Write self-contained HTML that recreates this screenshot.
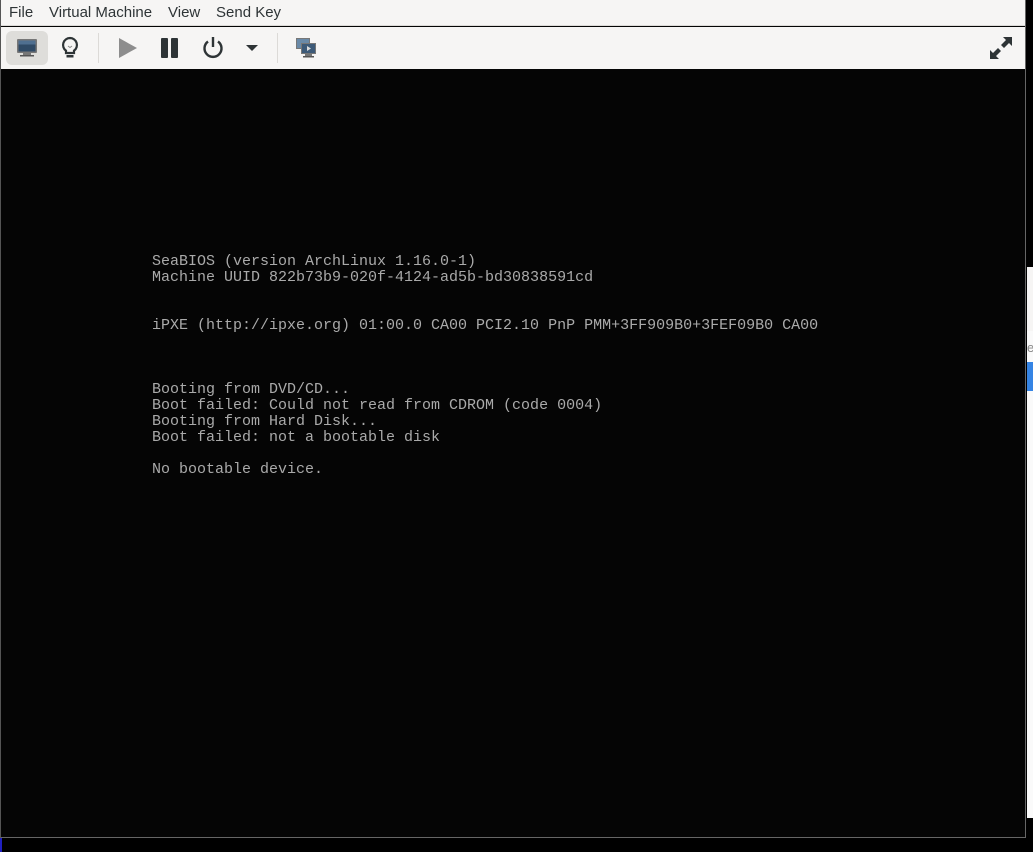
<!DOCTYPE html>
<html><head><meta charset="utf-8"><style>
*{margin:0;padding:0;box-sizing:border-box}
html,body{width:1033px;height:852px;overflow:hidden;background:#000;font-family:"Liberation Sans","DejaVu Sans",sans-serif}
.win{position:absolute;left:0;top:0;width:1026px;height:838px;background:#050505;border-left:1px solid #555;border-right:1px solid #666;border-bottom:1px solid #666}
.menu{position:absolute;left:0;top:0;width:100%;height:26px;background:#f6f5f4;border-bottom:1px solid #dcdad7;font-size:15px;color:#2e3436}
.menu span{position:absolute;top:4px}
.tb{position:absolute;left:0;top:27px;width:100%;height:42px;background:#f6f5f4}
.sel{position:absolute;left:5px;top:4px;width:42px;height:34px;background:#deddda;border-radius:6px}
.sep{position:absolute;top:6px;width:1px;height:30px;background:#dcdad7}
svg{position:absolute}
pre{position:absolute;left:151px;top:254px;font-family:"Liberation Mono","DejaVu Sans Mono",monospace;font-size:15px;line-height:16px;color:#aaa;letter-spacing:0}
.r{position:absolute;left:1027px;width:6px}
</style></head><body>
<div class="r" style="top:267px;height:64px;background:#f6f5f4"></div>
<div class="r" style="top:331px;height:31px;background:#fafafa"></div>
<div class="r" style="top:362px;height:29px;background:#3584e4"></div>
<div class="r" style="top:391px;height:427px;background:#fafafa"></div>
<div style="position:absolute;left:1027px;top:340px;font-size:13px;color:#888">e</div>
<div class="win">
<div class="menu"><span style="left:8px">File</span><span style="left:48px">Virtual Machine</span><span style="left:167px">View</span><span style="left:215px">Send Key</span></div>
<div class="tb">
<div class="sel"></div>
<svg style="left:14px;top:8px" width="24" height="24" viewBox="0 0 24 24"><rect x="2" y="4" width="20" height="14" rx="1" fill="#777"/><rect x="3.5" y="5.5" width="17" height="11" fill="#2f4a66"/><rect x="3.5" y="5.5" width="17" height="4" fill="#4f6f90"/><rect x="8" y="18" width="8" height="2" fill="#777"/><rect x="5" y="20" width="14" height="1.5" fill="#555"/></svg>
<svg style="left:57px;top:8px" width="24" height="26" viewBox="0 0 24 26"><path d="M12 3a7 7 0 0 0-4 12.7V18h8v-2.3A7 7 0 0 0 12 3z" fill="none" stroke="#2e3436" stroke-width="2.2"/><rect x="8.5" y="20" width="7" height="2.5" fill="#2e3436"/><path d="M10 11l2 1.5 2-1.5" fill="none" stroke="#888" stroke-width="1"/></svg>
<div class="sep" style="left:97px"></div>
<svg style="left:116px;top:10px" width="22" height="22" viewBox="0 0 22 22"><path d="M2 1L20 11 2 21z" fill="#8d8d8d"/></svg>
<svg style="left:159px;top:10px" width="20" height="22" viewBox="0 0 20 22"><rect x="1" y="1" width="7" height="20" rx="1" fill="#2e3436"/><rect x="11" y="1" width="7" height="20" rx="1" fill="#2e3436"/></svg>
<svg style="left:200px;top:9px" width="24" height="24" viewBox="0 0 24 24"><path d="M7 5.5A8.5 8.5 0 1 0 17 5.5" fill="none" stroke="#2e3436" stroke-width="2.4"/><rect x="10.8" y="1" width="2.4" height="10" fill="#2e3436"/></svg>
<svg style="left:244px;top:17px" width="14" height="8" viewBox="0 0 14 8"><path d="M1 1h12L7 7z" fill="#2e3436"/></svg>
<div class="sep" style="left:276px"></div>
<svg style="left:294px;top:10px" width="22" height="22" viewBox="0 0 22 22"><rect x="1" y="1" width="14" height="11" fill="#777"/><rect x="2" y="2" width="12" height="9" fill="#6a8aa8"/><rect x="6" y="6" width="15" height="11" fill="#777"/><rect x="7" y="7" width="13" height="9" fill="#3d5a78"/><path d="M12 9l4 2.5-4 2.5z" fill="#ddd"/><rect x="10" y="17" width="7" height="2" fill="#777"/><rect x="8" y="19" width="11" height="1.5" fill="#555"/></svg>
<svg style="left:987px;top:8px" width="26" height="26" viewBox="0 0 26 26"><path d="M15 2h9v9l-3-3-5 5-3-3 5-5z" fill="#2e3436"/><path d="M11 24H2v-9l3 3 5-5 3 3-5 5z" fill="#2e3436"/></svg>
</div>
<pre>SeaBIOS (version ArchLinux 1.16.0-1)
Machine UUID 822b73b9-020f-4124-ad5b-bd30838591cd


iPXE (http://ipxe.org) 01:00.0 CA00 PCI2.10 PnP PMM+3FF909B0+3FEF09B0 CA00



Booting from DVD/CD...
Boot failed: Could not read from CDROM (code 0004)
Booting from Hard Disk...
Boot failed: not a bootable disk

No bootable device.</pre>
</div>
<div style="position:absolute;left:0;top:838px;width:2px;height:14px;background:#2020c0"></div>
</body></html>
